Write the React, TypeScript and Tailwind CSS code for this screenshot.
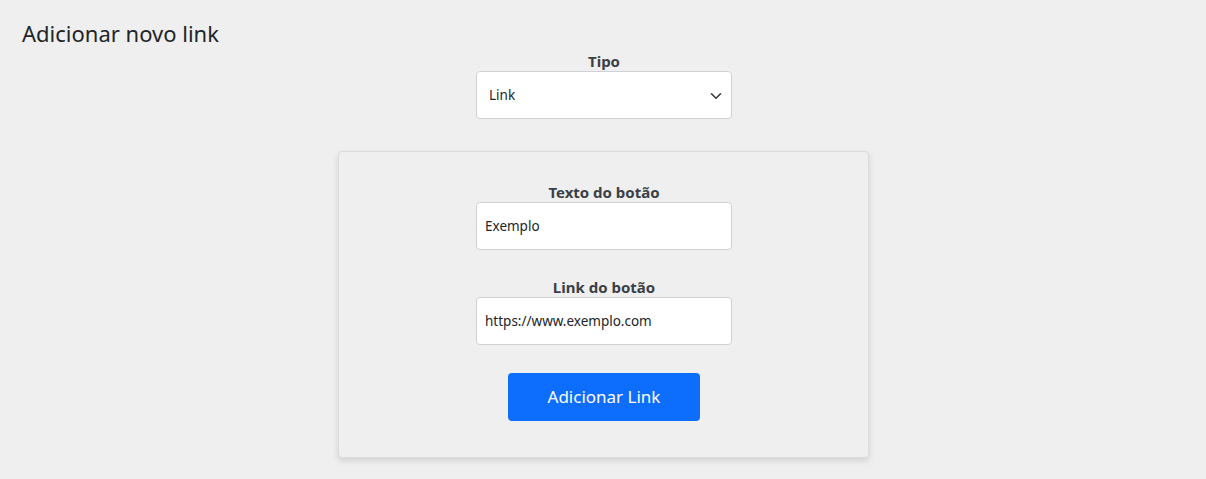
const App = () => {
  return (
    <div className="min-h-[479px] bg-[#efefef] font-['Noto_Sans',sans-serif] text-[#212529]">
      <h1 className="px-[22px] pt-[19px] text-[22px] leading-[28px]">Adicionar novo link</h1>
      <div className="flex flex-col items-center pl-[2px]">
        <label className="mt-[4px] text-[15px] font-bold leading-[20px] text-[#3b4046]">Tipo</label>
        <div className="relative mt-0 w-[256px]">
          <select className="h-[48px] w-full appearance-none rounded-[4px] border border-[#cfd2d5] bg-white pl-[12px] text-[13.5px] text-[#212529] outline-none">
            <option>Link</option>
          </select>
          <svg
            className="pointer-events-none absolute right-[10px] top-[21px]"
            width="12"
            height="8"
            viewBox="0 0 12 8"
            fill="none"
            stroke="#343a40"
            strokeWidth="1.6"
            strokeLinecap="round"
            strokeLinejoin="round"
          >
            <path d="M1.5 1.8 6 6.2l4.5-4.4" />
          </svg>
        </div>
        <div className="ml-[-2px] mt-[32px] flex h-[307px] w-[531px] flex-col items-center rounded-[4px] border border-[#dcdcdc] bg-[#efefef] pl-[2px] pt-[30px] shadow-[0_3px_6px_rgba(0,0,0,0.12)]">
          <label className="text-[15px] font-bold leading-[20px] text-[#3b4046]">Texto do botão</label>
          <input
            className="h-[48px] w-[256px] rounded-[4px] border border-[#cfd2d5] bg-white px-[8px] text-[13.5px] text-[#212529] outline-none"
            defaultValue="Exemplo"
          />
          <label className="mt-[27px] text-[15px] font-bold leading-[20px] text-[#3b4046]">Link do botão</label>
          <input
            className="h-[48px] w-[256px] rounded-[4px] border border-[#cfd2d5] bg-white px-[8px] text-[13.5px] text-[#212529] outline-none"
            defaultValue="https://www.exemplo.com"
          />
          <button className="mt-[28px] h-[48px] w-[192px] rounded-[4px] bg-[#0d6efd] text-[17px] text-white">
            Adicionar Link
          </button>
        </div>
      </div>
    </div>
  );
};

export default App;
